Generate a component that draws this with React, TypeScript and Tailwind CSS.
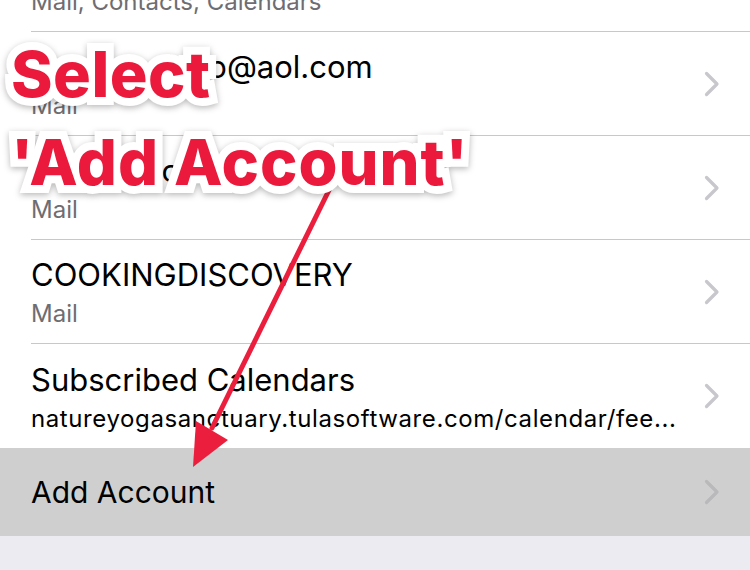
import React from 'react';

const rows = [
  { title: 'iCloud', sub: 'Mail, Contacts, Calendars', subDark: false },
  { title: 'cookingdisco@aol.com', sub: 'Mail', subDark: false },
  { title: 'Gmail Account', sub: 'Mail', subDark: false },
  { title: 'COOKINGDISCOVERY', sub: 'Mail', subDark: false },
  { title: 'Subscribed Calendars', sub: 'natureyogasanctuary.tulasoftware.com/calendar/fee...', subDark: true },
];

function Chevron({ light }: { light?: boolean }) {
  return (
    <svg width="16" height="26" viewBox="0 0 16 26" className="shrink-0">
      <polyline
        points="2.5,2.5 13,13 2.5,23.5"
        fill="none"
        stroke={light ? '#b9b9bc' : '#c7c7cc'}
        strokeWidth="3.2"
        strokeLinecap="round"
        strokeLinejoin="round"
      />
    </svg>
  );
}

function Label({ text, tracking }: { text: string; tracking: string }) {
  // two stacked layers: white outline behind, red fill on top
  return (
    <div className={`grid font-['Inter','Liberation_Sans',sans-serif] text-[63px] font-extrabold leading-[88px] whitespace-nowrap ${tracking}`}>
      <span className="col-start-1 row-start-1 text-white [-webkit-text-stroke:16px_white] [filter:drop-shadow(0_2px_3px_rgba(0,0,0,0.28))]">
        {text}
      </span>
      <span className="relative col-start-1 row-start-1 text-[#eb1a3c]">{text}</span>
    </div>
  );
}

export default function App() {
  return (
    <div className="relative w-[750px] h-[570px] overflow-hidden bg-[#ebebf1] font-['Inter','Liberation_Sans',sans-serif]">
      <div className="-mt-[72px] bg-white">
        {rows.map((r, i) => (
          <div key={i} className="pl-[31px] bg-white">
            <div
              className={`h-[104px] flex items-center pr-[30px] ${i < rows.length - 1 ? 'border-b border-[#c8c7cc]' : ''}`}
            >
              <div className="flex-1 min-w-0 pt-[5px]">
                <div className="text-[31px] leading-[40px] text-black">{r.title}</div>
                <div
                  className={`text-[24px] leading-[38px] ${r.subDark ? 'text-black tracking-[0.6px]' : 'text-[#6d6d72]'}`}
                >
                  {r.sub}
                </div>
              </div>
              <Chevron />
            </div>
          </div>
        ))}
      </div>
      <div className="h-[88px] bg-[#cfcfcf] pl-[31px] pr-[30px] flex items-center">
        <div className="flex-1 text-[30px] text-black">Add Account</div>
        <Chevron light />
      </div>

      {/* annotation arrow */}
      <svg className="absolute inset-0" width="750" height="570" viewBox="0 0 750 570">
        <line x1="333" y1="182" x2="212" y2="428" stroke="#eb1f3d" strokeWidth="5" strokeLinecap="round" />
        <polygon points="193,467 196,421 228,440" fill="#eb1f3d" />
      </svg>

      {/* annotation label */}
      <div className="absolute left-[11px] top-[30px] flex flex-col">
        <Label text="Select" tracking="tracking-[0.5px]" />
        <Label text="'Add Account'" tracking="tracking-[1px]" />
      </div>
    </div>
  );
}
